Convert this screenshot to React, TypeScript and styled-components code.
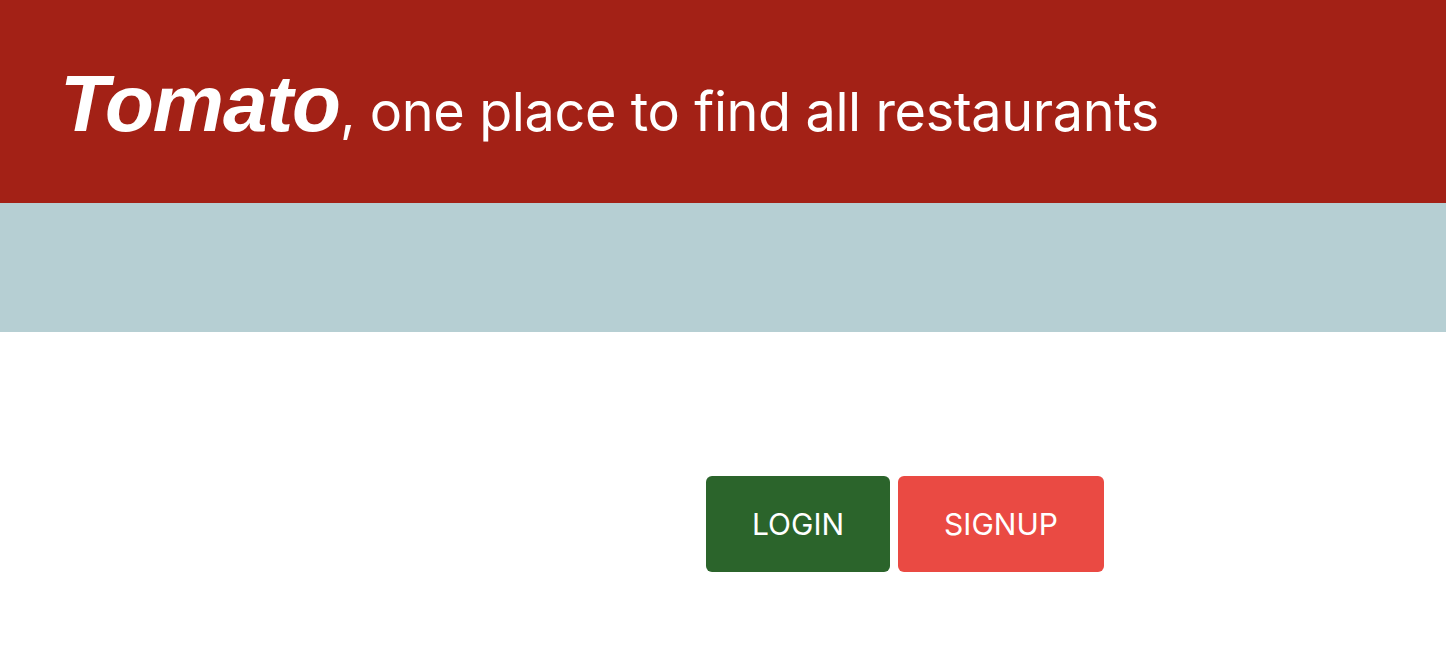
import styled, { createGlobalStyle } from "styled-components";

const GlobalStyle = createGlobalStyle`
  html, body {
    margin: 0;
    padding: 0;
    background: #ffffff;
    font-family: Inter, "Liberation Sans", Arial, sans-serif;
  }
`;

export default function App() {
  return (
    <>
      <GlobalStyle />
      <Header>
        <Title>
          <Brand>Tomato</Brand>, one place to find all restaurants
        </Title>
      </Header>
      <Banner />
      <Actions>
        <ActionButton $bg="#2b642b">LOGIN</ActionButton>
        <ActionButton $bg="#ea4a43">SIGNUP</ActionButton>
      </Actions>
    </>
  );
}

const Header = styled.header`
  background-color: #a32116;
  height: 203px;
  display: flex;
  align-items: center;
  padding: 0 60px;
  box-sizing: border-box;
`;

const Title = styled.h1`
  margin: 0;
  margin-top: 4px;
  color: #ffffff;
  font-family: Inter, "Liberation Sans", sans-serif;
  font-weight: 400;
  font-size: 54px;
  letter-spacing: -0.4px;
  white-space: nowrap;
`;

const Brand = styled.span`
  font-family: "Liberation Sans", Arial, sans-serif;
  font-style: italic;
  font-weight: 700;
  font-size: 80px;
  letter-spacing: -1px;
`;

const Banner = styled.div`
  background-color: #b6cfd3;
  height: 129px;
`;

const Actions = styled.div`
  display: flex;
  gap: 8px;
  padding: 144px 0 0 706px;
`;

const ActionButton = styled.button<{ $bg: string }>`
  background-color: ${(p) => p.$bg};
  color: #ffffff;
  border: none;
  border-radius: 6px;
  height: 96px;
  padding: 0 46px;
  font-family: Inter, "Liberation Sans", sans-serif;
  font-size: 30px;
  font-weight: 400;
  cursor: pointer;
`;
